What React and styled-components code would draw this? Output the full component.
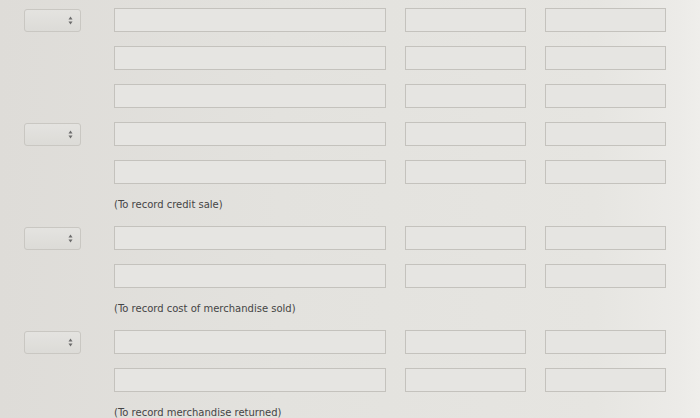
import React from "react";
import styled, { createGlobalStyle } from "styled-components";

const GlobalStyle = createGlobalStyle`
  html, body {
    margin: 0;
    padding: 0;
  }
  body {
    width: 700px;
    height: 418px;
    overflow: hidden;
    font-family: "DejaVu Sans", Verdana, sans-serif;
    background: linear-gradient(90deg, #dedcd8 0%, #e3e2de 40%, #e6e5e1 85%, #ecebe8 97%, #efeeeb 100%);
  }
`;

const Sheet = styled.div`
  display: flex;
  flex-direction: column;
  gap: 14px;
  padding-top: 8px;
  width: 700px;
  height: 418px;
  box-sizing: border-box;
`;

const Row = styled.div`
  display: flex;
  align-items: center;
  height: 24px;
  padding-left: 24px;
`;

const Amounts = styled.div`
  display: flex;
  gap: 19px;
  margin-left: 19px;
`;

const SelectBox = styled.div`
  flex: none;
  width: 57px;
  height: 23px;
  margin-right: 33px;
  box-sizing: border-box;
  border: 1px solid #c9c7c2;
  border-radius: 3px;
  background: linear-gradient(180deg, #e4e3e0 0%, #dcdbd7 100%);
  display: flex;
  align-items: center;
  justify-content: flex-end;
  padding-right: 7px;
  visibility: ${(p) => (p.$hidden ? "hidden" : "visible")};
`;

const Field = styled.div`
  flex: none;
  width: ${(p) => p.$w}px;
  height: 24px;
  box-sizing: border-box;
  border: 1px solid #c4c2bd;
  background: #e6e5e2;
`;

const Note = styled.div`
  height: 14px;
  line-height: 14px;
  font-size: 10px;
  color: #454545;
  padding-left: 114px;
`;

const Arrows = () => (
  <svg width="5" height="9" viewBox="0 0 5 9">
    <path d="M2.5 0.5 L4.5 3.5 L0.5 3.5 Z" fill="#6a6a6a" />
    <path d="M2.5 8.5 L4.5 5.5 L0.5 5.5 Z" fill="#6a6a6a" />
  </svg>
);

const groups = [
  { rows: 5, selects: [0, 3], note: "(To record credit sale)" },
  { rows: 2, selects: [0], note: "(To record cost of merchandise sold)" },
  { rows: 2, selects: [0], note: "(To record merchandise returned)" },
];

const App = () => {
  return (
    <>
      <GlobalStyle />
      <Sheet>
        {groups.map((g, gi) => (
          <React.Fragment key={gi}>
            {Array.from({ length: g.rows }).map((_, ri) => (
              <Row key={ri}>
                <SelectBox $hidden={!g.selects.includes(ri)}>
                  <Arrows />
                </SelectBox>
                <Field $w={272} />
                <Amounts>
                  <Field $w={121} />
                  <Field $w={121} />
                </Amounts>
              </Row>
            ))}
            <Note>{g.note}</Note>
          </React.Fragment>
        ))}
      </Sheet>
    </>
  );
};

export default App;
